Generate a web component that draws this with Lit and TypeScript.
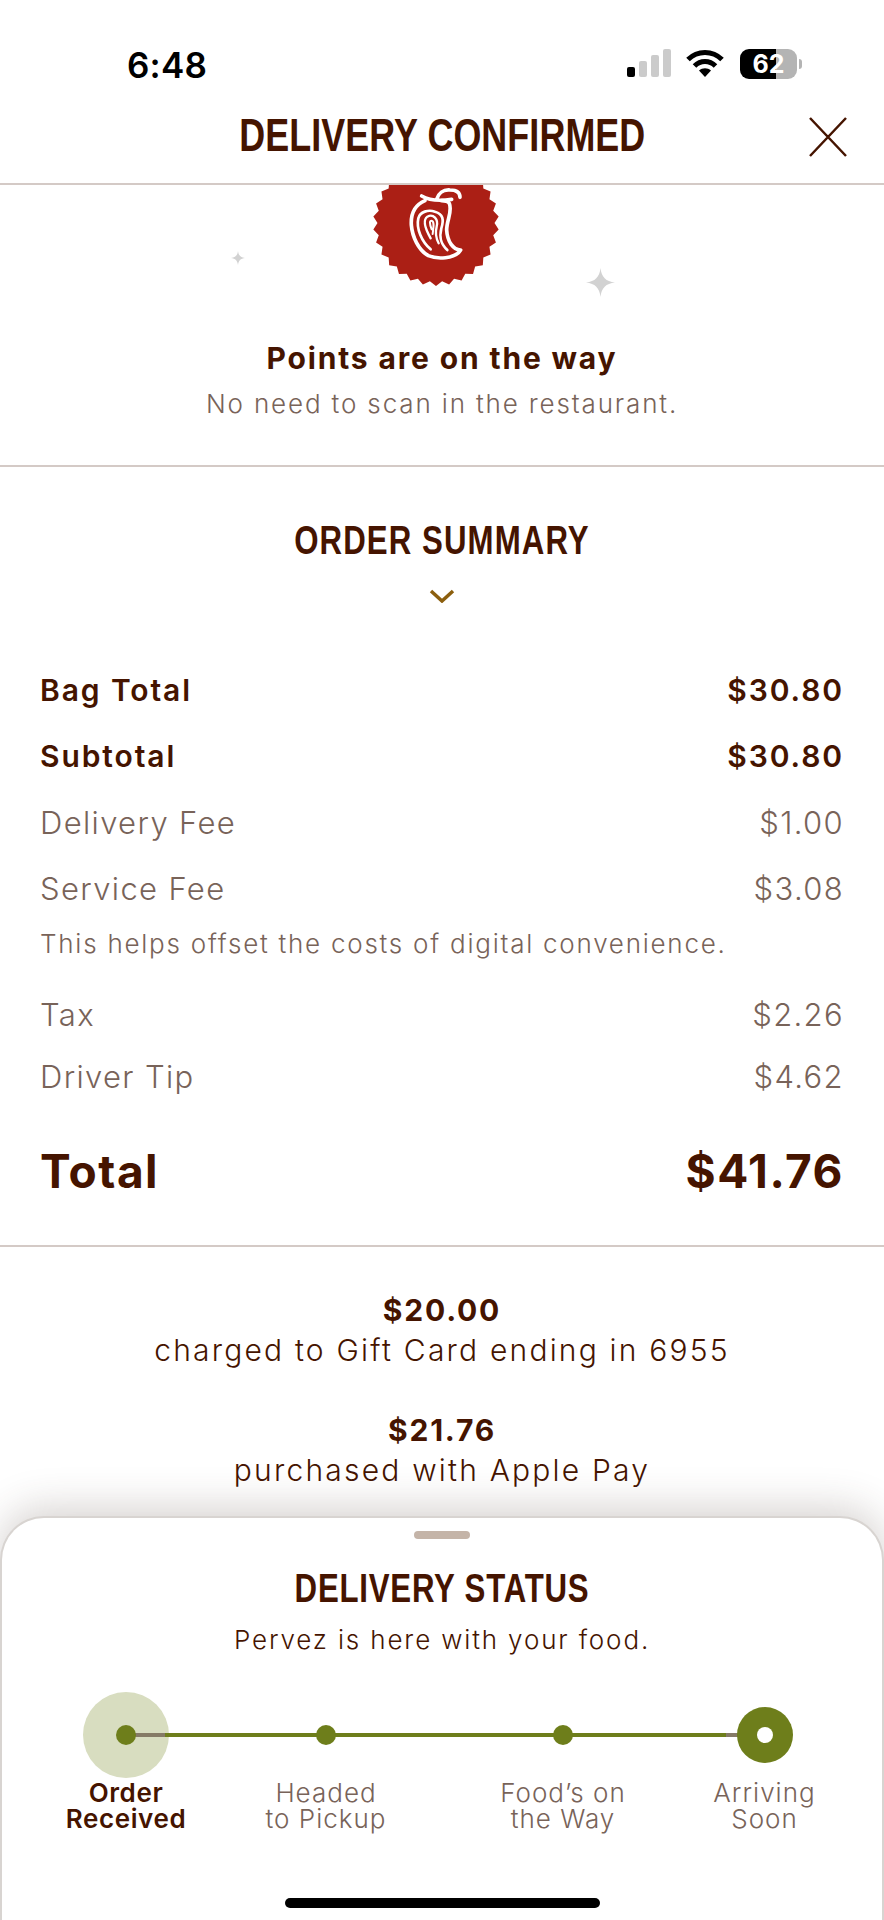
import { LitElement, html, css, svg } from "lit";
import { customElement } from "lit/decorators.js";

function badgePoints(): string {
  const pts: string[] = [];
  const teeth = 30;
  for (let i = 0; i < teeth * 2; i++) {
    const r = i % 2 === 0 ? 63 : 58.5;
    const a = (Math.PI * i) / teeth + Math.PI / 2;
    pts.push(`${(63 + r * Math.cos(a)).toFixed(2)},${(63 + r * Math.sin(a)).toFixed(2)}`);
  }
  return pts.join(" ");
}

const sparkle = svg`<path d="M12 0C12.8 7.5 16.5 11.2 24 12C16.5 12.8 12.8 16.5 12 24C11.2 16.5 7.5 12.8 0 12C7.5 11.2 11.2 7.5 12 0Z" fill="currentColor"/>`;

@customElement("app-root")
export class AppRoot extends LitElement {
  static styles = css`
    :host { display: block; width: 884px; height: 1920px; background: #fff; overflow: hidden; font-family: "Inter", "Liberation Sans", sans-serif; font-weight: 300; color: #451400; }
    .page { height: 1920px; display: flex; flex-direction: column; position: relative; }
    .status { height: 100px; display: flex; justify-content: space-between; align-items: flex-start; padding: 46px 82px 0 127px; box-sizing: border-box; color: #000; flex: none; }
    .time { font: 600 35px/38px "Inter", "Liberation Sans", sans-serif; letter-spacing: 0.2px; }
    .icons { display: flex; align-items: flex-start; margin-top: 3px; }
    .wifi { margin-left: 15px; }
    .bat-wrap { display: flex; align-items: center; margin-left: 16px; }
    .bat { width: 57px; height: 30px; border-radius: 9px; background: linear-gradient(90deg, #000 63%, #b4b4b4 63%); color: #fff; font: 700 25px/30px "Inter", "Liberation Sans", sans-serif; text-align: center; }
    .nib { width: 3px; height: 10px; border-radius: 0 3px 3px 0; background: #b4b4b4; margin-left: 2px; }
    .head { height: 83px; border-bottom: 2px solid #d4cac6; display: flex; align-items: center; justify-content: center; position: relative; flex: none; }
    .cond { font-family: "Liberation Sans", sans-serif; font-weight: 700; transform: scaleX(.78); display: block; white-space: nowrap; }
    h1 { margin: 0 0 14px; font-size: 46px; line-height: 50px; letter-spacing: 0.1px; }
    .close { position: absolute; left: 808px; top: 17px; width: 40px; height: 40px; }
    .scroll { flex: 1; overflow: hidden; min-height: 0; }
    .hero { display: flow-root; height: 282px; border-bottom: 2px solid #d4cac6; position: relative; text-align: center; box-sizing: border-box; }
    .badge { display: block; margin: -25px 0 0 373px; width: 126px; height: 126px; }
    .spark { position: absolute; color: #d2d2d2; }
    .s1 { left: 231px; top: 66px; width: 14px; height: 14px; }
    .s2 { left: 586px; top: 83px; width: 29px; height: 29px; }
    .hero h2 { margin: 52px 0 0; font-size: 30px; line-height: 40px; font-weight: 700; letter-spacing: 1.85px; }
    .hero p { margin: 9px 0 0; font-size: 26px; line-height: 34px; color: #786359; letter-spacing: 1.85px; }
    .summary { padding: 0 40px; height: 780px; box-sizing: border-box; border-bottom: 2px solid #d4cac6; }
    .summary h2 { margin: 0; padding-top: 50px; text-align: center; font-size: 40px; line-height: 46px; letter-spacing: 1.4px; }
    .chev { display: block; margin: 26px auto 0; width: 26px; height: 14px; }
    .rows { margin-top: 54px; }
    .row { display: flex; justify-content: space-between; height: 66px; align-items: center; font-size: 31px; color: #786359; letter-spacing: 1.35px; }
    .row.b { color: #451400; font-weight: 600; font-size: 30px; letter-spacing: 1.9px; }
    .note { font-size: 26px; line-height: 34px; color: #786359; margin: 6px 0 22px; letter-spacing: 1.75px; }
    .row.s { height: 62px; }
    .row.total { font-size: 46px; font-weight: 700; color: #451400; margin-top: 31px; letter-spacing: 1.5px; }
    .pay { text-align: center; font-size: 30px; line-height: 40px; padding-top: 43px; letter-spacing: 2.2px; font-weight: 300; }
    .pay b { display: block; font-weight: 700; letter-spacing: 1.8px; }
    .pay div + div { margin-top: 40px; }
    .sheet { flex: none; height: 404px; box-sizing: border-box; border: 2px solid #d8d4d1; border-bottom: 0; border-radius: 44px 44px 0 0; background: #fff; box-shadow: 0 -8px 40px rgba(70, 50, 40, .22); position: relative; text-align: center; }
    .handle { width: 56px; height: 8px; border-radius: 4px; background: #c4b4a8; margin: 13px auto 0; }
    .sheet h2 { margin: 26px 0 0; font-size: 40px; line-height: 46px; letter-spacing: 1px; }
    .sheet p { margin: 12px 0 0; font-size: 26px; line-height: 34px; letter-spacing: 1.85px; }
    .track { position: relative; display: grid; grid-template-columns: 200px 200px 274px 129px; margin: 35px 0 0 24px; }
    .line { position: absolute; z-index: 1; left: 100px; width: 638px; top: 41px; height: 4px; background: linear-gradient(90deg, #857a66 39px, #6e7e1b 39px, #6e7e1b 600px, #857a66 600px); }
    .step { display: flex; flex-direction: column; align-items: center; position: relative; font-size: 26px; line-height: 26px; color: #786359; letter-spacing: 1px; }
    .mark { height: 86px; width: 86px; display: flex; align-items: center; justify-content: center; border-radius: 50%; margin-bottom: 2px; }
    .mark.halo { background: #d8ddc0; }
    .dot { width: 20px; height: 20px; border-radius: 50%; background: #6e7e1b; position: relative; z-index: 2; }
    .ring { width: 56px; height: 56px; border-radius: 50%; background: #6e7e1b; display: flex; align-items: center; justify-content: center; position: relative; z-index: 2; }
    .ring i { width: 16px; height: 16px; border-radius: 50%; background: #fff; }
    .step.on { color: #451400; font-weight: 600; letter-spacing: .6px; }
    .home { position: absolute; left: 283px; top: 380px; width: 315px; height: 10px; border-radius: 5px; background: #000; }
  `;

  private row(l: string, r: string, cls = "") {
    return html`<div class="row ${cls}"><span>${l}</span><span>${r}</span></div>`;
  }

  render() {
    return html`<div class="page">
      <div class="status">
        <div class="time">6:48</div>
        <div class="icons">
          <svg width="44" height="28" viewBox="0 0 44 28">
            <rect x="0" y="18" width="8" height="10" rx="2" fill="#000"/>
            <rect x="12" y="12" width="8" height="16" rx="2" fill="#cbcbcb"/>
            <rect x="24" y="6" width="8" height="22" rx="2" fill="#cbcbcb"/>
            <rect x="36" y="0" width="8" height="28" rx="2" fill="#cbcbcb"/>
          </svg>
          <svg class="wifi" width="38" height="28" viewBox="0 0 38 28" fill="none" stroke="#000" stroke-width="5">
            <path d="M2 10.5C11.5 1 26.500 1 36 10.500"/>
            <path d="M8.500 17C14.500 11 23.500 11 29.500 17"/>
            <path d="M19 28L13 21.500C16.500 18.500 21.500 18.500 25 21.500Z" fill="#000" stroke="none"/>
          </svg>
          <div class="bat-wrap"><div class="bat">62</div><div class="nib"></div></div>
        </div>
      </div>
      <div class="head">
        <h1 class="cond">DELIVERY CONFIRMED</h1>
        <svg class="close" viewBox="0 0 40 40" fill="none" stroke="#451400" stroke-width="2.500"><path d="M2 1L38 39M38 1L2 39"/></svg>
      </div>
      <div class="scroll">
        <section class="hero">
          <svg class="badge" viewBox="0 0 126 126">
            <polygon points=${badgePoints()} fill="#ab1f15"/>
            <g transform="translate(-33,10) scale(.3333)" fill="none" stroke="#fff" stroke-width="11" stroke-linecap="round" stroke-linejoin="round">
              <path d="M255 92C225 105 212 130 214 165C217 200 235 240 265 257C290 268 345 268 362 240C340 240 322 215 320 180C320 150 338 125 328 100C325 95 315 92 305 92"/>
              <path d="M245 78C262 88 290 95 335 88M290 88C295 70 310 58 330 60C350 60 360 68 360 82"/>
              <path stroke-width="8" d="M272 238C245 215 228 175 235 145C240 125 265 118 285 125C310 132 312 150 304 175C298 200 300 220 322 240"/>
              <path stroke-width="7" d="M272 205C255 175 248 150 262 140C280 130 296 148 290 170C285 190 288 205 296 220"/>
              <path stroke-width="6" d="M275 178C268 160 268 150 276 153C284 156 280 175 278 192"/>
            </g>
          </svg>
          <svg class="spark s1" viewBox="0 0 24 24">${sparkle}</svg>
          <svg class="spark s2" viewBox="0 0 24 24">${sparkle}</svg>
          <h2>Points are on the way</h2>
          <p>No need to scan in the restaurant.</p>
        </section>
        <section class="summary">
          <h2 class="cond">ORDER SUMMARY</h2>
          <svg class="chev" viewBox="0 0 26 14" fill="none" stroke="#8c5f0e" stroke-width="3.500"><path d="M2 2L13 12L24 2"/></svg>
          <div class="rows">
            ${this.row("Bag Total", "$30.80", "b")}
            ${this.row("Subtotal", "$30.80", "b")}
            ${this.row("Delivery Fee", "$1.00")}
            ${this.row("Service Fee", "$3.08")}
            <div class="note">This helps offset the costs of digital convenience.</div>
            ${this.row("Tax", "$2.26", "s")}
            ${this.row("Driver Tip", "$4.62", "s")}
            ${this.row("Total", "$41.76", "total")}
          </div>
        </section>
        <section class="pay">
          <div><b>$20.00</b>charged to Gift Card ending in 6955</div>
          <div><b>$21.76</b>purchased with Apple Pay</div>
        </section>
      </div>
      <section class="sheet">
        <div class="handle"></div>
        <h2 class="cond">DELIVERY STATUS</h2>
        <p>Pervez is here with your food.</p>
        <div class="track">
          <div class="line"></div>
          <div class="step on"><div class="mark halo"><div class="dot"></div></div>Order<br/>Received</div>
          <div class="step"><div class="mark"><div class="dot"></div></div>Headed<br/>to Pickup</div>
          <div class="step"><div class="mark"><div class="dot"></div></div>Food’s on<br/>the Way</div>
          <div class="step"><div class="mark"><div class="ring"><i></i></div></div>Arriving<br/>Soon</div>
        </div>
        <div class="home"></div>
      </section>
    </div>`;
  }
}
